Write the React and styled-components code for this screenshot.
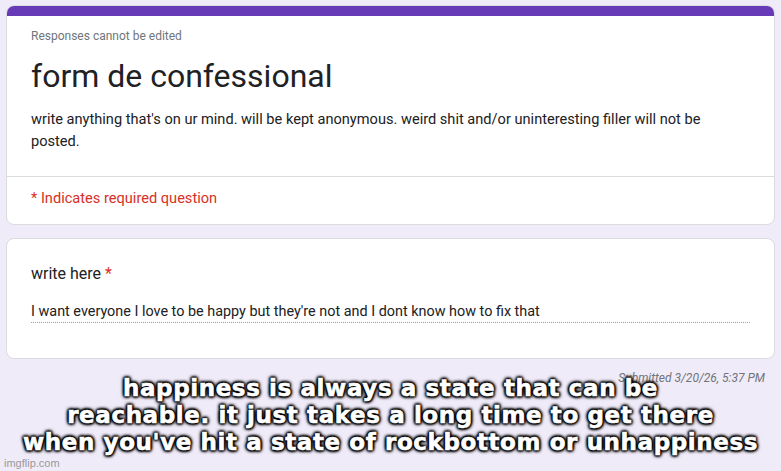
import React from "react";
import styled, { createGlobalStyle } from "styled-components";

const GlobalStyle = createGlobalStyle`
  html, body {
    margin: 0;
    padding: 0;
    background: #f0ebf8;
  }
  body {
    font-family: Roboto, "Liberation Sans", sans-serif;
  }
`;

const Page = styled.div`
  position: relative;
  width: 781px;
  height: 471px;
  overflow: hidden;
  background: #f0ebf8;
  padding: 5px 6px 0 6px;
  box-sizing: border-box;
  display: flex;
  flex-direction: column;
  font-family: Roboto, "Liberation Sans", sans-serif;
`;

const Card = styled.div`
  background: #fff;
  border: 1px solid #dadce0;
  border-radius: 8px;
  overflow: hidden;
  margin-bottom: ${(p) => p.$gap || 0}px;
`;

const TopBar = styled.div`
  height: 10px;
  background: #673ab7;
`;

const Section = styled.div`
  padding: ${(p) => p.$pad || "0 24px"};
  border-top: ${(p) => (p.$divider ? "1px solid #dadce0" : "none")};
`;

const Notice = styled.div`
  font-size: 12px;
  color: #70757a;
  line-height: 16px;
`;

const Title = styled.h1`
  margin: 12px 0 0;
  font-size: 32px;
  font-weight: 400;
  color: #202124;
  line-height: 40px;
`;

const Desc = styled.p`
  margin: 12px 0 0;
  font-size: 14.6px;
  line-height: 22px;
  color: #202124;
  padding-right: 30px;
`;

const Required = styled.div`
  font-size: 14.6px;
  color: #d93025;
  line-height: 20px;
`;

const Question = styled.div`
  font-size: 16px;
  color: #202124;
  line-height: 24px;
`;

const Star = styled.span`
  color: #d93025;
`;

const Answer = styled.div`
  margin-top: 17px;
  font-size: 14.4px;
  line-height: 18px;
  color: #202124;
  border-bottom: 1px dotted #9aa0a6;
  padding-bottom: 1px;
`;

const Submitted = styled.div`
  align-self: flex-end;
  font-size: 12px;
  font-style: italic;
  color: #70757a;
  margin-top: 12px;
  margin-right: 10px;
`;

const Caption = styled.div`
  position: absolute;
  left: 0;
  right: 0;
  top: 375px;
  text-align: center;
  font-family: "DejaVu Sans", sans-serif;
  font-weight: 700;
  font-size: 23px;
  letter-spacing: 0.6px;
  line-height: 27px;
  color: #fff;
  -webkit-text-stroke: 0.6px #fff;
  text-shadow: 0 0 2px #000, 0 0 2px #000, 0 0 3px #000, 0 0 4px #000,
    1px 1px 3px #000, -1px -1px 3px #000, 1px -1px 3px #000, -1px 1px 3px #000,
    0 0 5px rgba(0, 0, 0, 0.6);
`;

const Watermark = styled.div`
  position: absolute;
  left: 4px;
  bottom: 2px;
  font-size: 11px;
  color: #9a9a9a;
  font-family: "Liberation Sans", sans-serif;
`;

export default function App() {
  return (
    <>
      <GlobalStyle />
      <Page>
        <Card $gap={13}>
          <TopBar />
          <Section $pad="12px 24px 24px">
            <Notice>Responses cannot be edited</Notice>
            <Title>form de confessional</Title>
            <Desc>
              write anything that's on ur mind. will be kept anonymous. weird shit and/or
              uninteresting filler will not be posted.
            </Desc>
          </Section>
          <Section $divider $pad="11px 24px 16px">
            <Required>* Indicates required question</Required>
          </Section>
        </Card>
        <Card>
          <Section $pad="23px 24px 35px">
            <Question>
              write here <Star>*</Star>
            </Question>
            <Answer>
              I want everyone I love to be happy but they're not and I dont know how to fix that
            </Answer>
          </Section>
        </Card>
        <Submitted>Submitted 3/20/26, 5:37 PM</Submitted>
        <Caption>
          happiness is always a state that can be
          <br />
          reachable. it just takes a long time to get there
          <br />
          when you've hit a state of rockbottom or unhappiness
        </Caption>
        <Watermark>imgflip.com</Watermark>
      </Page>
    </>
  );
}
